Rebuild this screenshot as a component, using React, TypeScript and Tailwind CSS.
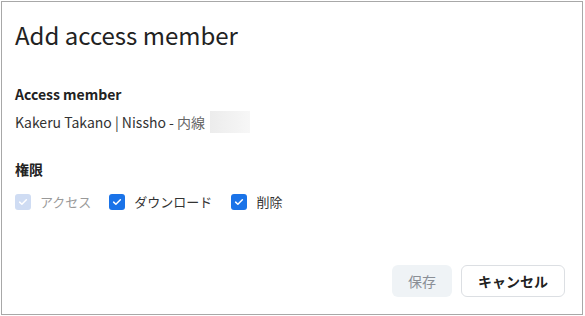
const Check = ({ disabled }: { disabled?: boolean }) => (
  <span
    className={
      "flex h-4 w-4 items-center justify-center rounded-[3px] " +
      (disabled ? "bg-[#cfdcf3]" : "bg-[#1a73e8]")
    }
  >
    <svg viewBox="0 0 16 16" className="h-3 w-3" fill="none">
      <path
        d="M3.5 8.2l3 2.8 6-6"
        stroke="white"
        strokeWidth="2"
        strokeLinecap="round"
        strokeLinejoin="round"
      />
    </svg>
  </span>
);

export default function App() {
  return (
    <div className="h-[316px] w-[585px] bg-white pl-[1px] pt-[1px] font-['Noto_Sans_CJK_JP','Noto_Sans',sans-serif]">
      <div className="flex h-[314px] w-[582px] flex-col border border-[#a8a8a8] bg-white pl-[13px] pr-[17px]">
        <h1 className="mt-[16px] text-[24px] leading-[34px] text-[#222]">
          Add access member
        </h1>

        {/* Member */}
        <div className="mt-[32px]">
          <p className="text-[14px] font-bold leading-[20px] text-[#222]">
            Access member
          </p>
          <p className="mt-[7px] flex items-center text-[14px] leading-[20px] text-[#333]">
            Kakeru Takano | Nissho -&nbsp;
            <span className="text-[#666]">内線</span>
            <span className="ml-[5px] h-[22px] w-[40px] bg-gradient-to-r from-[#ececec] to-[#f7f7f7]" />
          </p>
        </div>

        {/* Permissions */}
        <div className="mt-[26px]">
          <p className="text-[14px] font-bold leading-[20px] text-[#222]">権限</p>
          <div className="mt-[13px] flex items-center text-[13px] leading-[20px]">
            <label className="flex items-center gap-[9px] text-[#999]">
              <Check disabled />
              アクセス
            </label>
            <label className="ml-[18px] flex items-center gap-[9px] text-[#333]">
              <Check />
              ダウンロード
            </label>
            <label className="ml-[19px] flex items-center gap-[9px] text-[#333]">
              <Check />
              削除
            </label>
          </div>
        </div>

        {/* Footer */}
        <div className="mt-auto mb-[17px] flex justify-end gap-[9px]">
          <button className="h-[32px] w-[60px] rounded-[6px] bg-[#eff3f6] text-[14px] text-[#8a8f96]">
            保存
          </button>
          <button className="h-[32px] w-[104px] rounded-[6px] border border-[#dcdfe3] bg-white text-[14px] font-bold text-[#222]">
            キャンセル
          </button>
        </div>
      </div>
    </div>
  );
}
